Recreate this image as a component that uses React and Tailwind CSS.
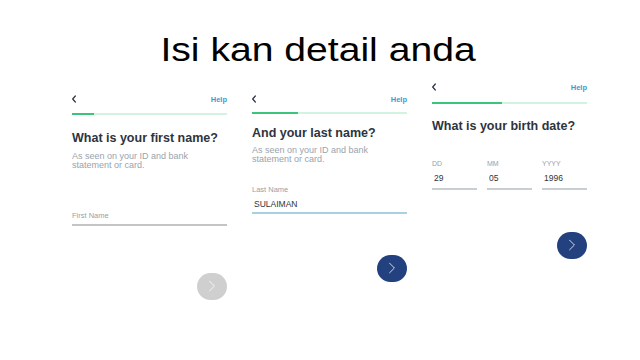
const Chevron = ({ className }) => (
  <svg viewBox="0 0 8 12" className={className} fill="none" stroke="currentColor" strokeWidth="1.8" strokeLinecap="round" strokeLinejoin="round">
    <path d="M6 1.5 L2 6 L6 10.5" />
  </svg>
);

const NextIcon = () => (
  <svg viewBox="0 0 10 14" className="w-[8px] h-[12px]" fill="none" stroke="currentColor" strokeWidth="1" strokeLinecap="round" strokeLinejoin="round">
    <path d="M2 1 L8 7 L2 13" />
  </svg>
);

const Header = ({ fill, gap }) => (
  <>
    <div className="h-[12px] flex items-center justify-between">
      <Chevron className="w-[6px] h-[8px] text-[#2d3440] ml-[-1px]" />
      <span className="text-[7.5px] font-bold text-[#3a9bd5] mt-[2px]">Help</span>
    </div>
    <div className={`h-[2px] bg-[#d3f3e1] flex ${gap}`}>
      <div className={`h-full bg-[#3cc47c] ${fill}`} />
    </div>
  </>
);

const Heading = ({ children, className }) => (
  <h2 className={`text-[12.5px] leading-[16px] font-bold text-[#2d3440] whitespace-nowrap ${className}`}>{children}</h2>
);

const Sub = ({ className }) => (
  <p className={`text-[9px] leading-[8.5px] text-[#9aa3ad] ${className}`}>
    As seen on your ID and bank
    <br />
    statement or card.
  </p>
);

const NextButton = ({ dark, className }) => (
  <div
    className={`self-end w-[30px] h-[27px] rounded-full flex items-center justify-center text-white ${
      dark ? "bg-[#23407f]" : "bg-[#cfcfcf]"
    } ${className}`}
  >
    <NextIcon />
  </div>
);

export default function App() {
  return (
    <div className="w-[640px] h-[360px] bg-white overflow-hidden" style={{ fontFamily: '"Liberation Sans", Arial, sans-serif' }}>
      <div className="pt-[32px] h-[66px] flex justify-center">
        <h1 className="text-[34px] leading-[34px] text-black scale-x-[1.15] ml-[-4px]">Isi kan detail anda</h1>
      </div>

      <div className="mt-[15px] ml-[72px] flex items-start gap-[25px]">
        {/* first name */}
        <div className="w-[155px] mt-[12px] flex flex-col">
          <Header fill="w-[22px]" gap="mt-[8px]" />
          <Heading className="mt-[15px]">What is your first name?</Heading>
          <Sub className="mt-[6px]" />
          <div className="mt-[42px] text-[7.5px] leading-[10px] text-[#9aa0a6]">First Name</div>
          <div className="mt-[3px] h-[1.5px] bg-[#c4c4c4]" />
          <NextButton className="mt-[47px]" />
        </div>

        {/* last name */}
        <div className="w-[155px] mt-[12px] flex flex-col">
          <Header fill="w-[46px]" gap="mt-[7px]" />
          <Heading className="mt-[11px]">And your last name?</Heading>
          <Sub className="mt-[5px]" />
          <div className="mt-[22px] text-[7.5px] leading-[10px] text-[#9aa0a6]">Last Name</div>
          <div className="mt-[3px] pl-[2px] text-[8.5px] leading-[12px] text-[#2d3440]">SULAIMAN</div>
          <div className="mt-[2px] h-[1.5px] bg-[#a9d0df]" />
          <NextButton dark className="mt-[41px]" />
        </div>

        {/* birth date */}
        <div className="w-[155px] flex flex-col">
          <Header fill="w-[70px]" gap="mt-[9px]" />
          <Heading className="mt-[14px]">What is your birth date?</Heading>
          <div className="mt-[25px] flex gap-[10px]">
            {[
              ["DD", "29"],
              ["MM", "05"],
              ["YYYY", "1996"],
            ].map(([label, value]) => (
              <div key={label} className="w-[45px] flex flex-col">
                <div className="text-[7px] leading-[10px] text-[#9aa0a6]">{label}</div>
                <div className="mt-[3px] pl-[2px] text-[8.5px] leading-[12px] text-[#2d3440]">{value}</div>
                <div className="mt-[4px] h-[1.5px] bg-[#c9ced3]" />
              </div>
            ))}
          </div>
          <NextButton dark className="mt-[42px]" />
        </div>
      </div>
    </div>
  );
}
